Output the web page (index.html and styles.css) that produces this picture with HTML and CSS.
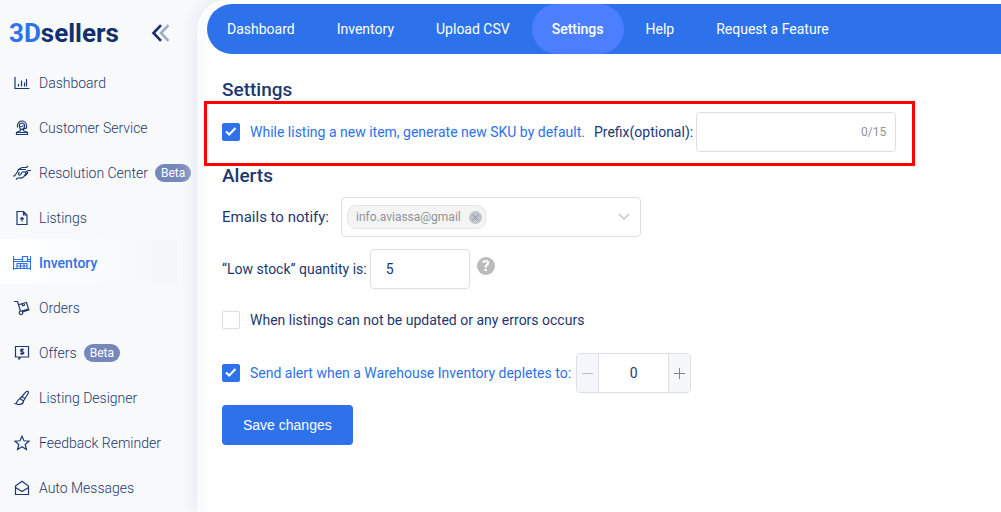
FILE: index.html
```html
<!DOCTYPE html>
<html lang="en">
<head>
<meta charset="utf-8">
<meta name="viewport" content="width=device-width, initial-scale=1">
<title>3Dsellers – Inventory settings</title>
<link rel="stylesheet" href="styles.css">
</head>
<body class="app">
<aside class="sidebar">
  <div class="brand">
    <a class="logo" href="#"><span class="logo-accent">3D</span>sellers</a>
    <button class="collapse" type="button" aria-label="Collapse menu">
      <svg width="20" height="18" viewBox="0 0 20 18" fill="none" stroke-width="2.6"><path d="M17.500 1.200 10 9l7.500 7.800" stroke="#9fadcb"/><path d="M10 1.200 2.500 9l7.500 7.800" stroke="#12306b"/></svg>
    </button>
  </div>
  <nav class="menu" aria-label="Main">
    <a class="menu-item" href="#">
      <svg class="icon" viewBox="0 0 18 18"><path d="M2 3v11.500h14.500M5.500 12.500V10M8.500 12.500V6.500M11.500 12.500V8.500M13.500 12.500V5"/></svg>Dashboard</a>
    <a class="menu-item" href="#">
      <svg class="icon" viewBox="0 0 18 18"><path d="M4.500 8.500V6.500a4.500 4.500 0 0 1 9 0V9l-3 .8M6.500 8V6.500a2.500 2.500 0 0 1 5 0c0 5-5 5-5 1.500 1.500 0 3-.5 3.500-1.500M7.500 10.500v1.200l-4 1.600v2.200h11v-2.200l-4-1.600v-1.200M3.500 13.500h11"/></svg>Customer Service</a>
    <a class="menu-item" href="#">
      <svg class="icon" viewBox="0 0 18 18"><path d="M0 12h1.500L4 8.500 5.500 5.500 9 3.500h4.500l1.500-1.500M6 5.500 13 5.500M6.500 8c-1.500 1.500-1 3 0 3.200 1.800 0 1.500-2.700 3.500-3.400l3 .2c0 3-1 3.700-2.500 5l-3 1.500M13 8l2-1.500h3M11 11.500c2 0 3-1 4-3.500M3 15.500l1.500-1.500 4-.2"/></svg>Resolution Center<span class="badge">Beta</span></a>
    <a class="menu-item" href="#">
      <svg class="icon" viewBox="0 0 18 18"><path d="M4 2.500h6.500L14 6v9.500H4zM10.500 2.500V6H14M9 12.500V8.500M7.200 10.200 9 8.500l1.800 1.700"/></svg>Listings</a>
    <a class="menu-item menu-item-active" href="#" aria-current="page">
      <svg class="icon" viewBox="0 0 18 18"><path d="M.5 2v14M17.500 2v14M.5 7.500h17M.5 14.500h17M.5 5.500h9M9.500 7.500v-5h5v5M14.500 5.500h3M4 14.500v-5h10v5M4 12h10M7.500 9.500v5M11 9.500v5"/></svg>Inventory</a>
    <a class="menu-item" href="#">
      <svg class="icon" viewBox="0 0 18 18"><path d="M1 2.500h3.500L7.500 12M9.500 13l7-2.200M6 5.500l7.500-2L15.500 10l-7 2M9 4.800l.7 2 1.800-.6-.6-2"/><circle cx="8" cy="13.800" r="1.800"/></svg>Orders</a>
    <a class="menu-item" href="#">
      <svg class="icon" viewBox="0 0 18 18"><path d="M2.500 2.500h13v10.500H8l-2 2v-2H2.500zM10.800 6c-.5-.7-3.300-.9-3.400.5 0 1.500 3.500.8 3.500 2.300 0 1.500-3 1.300-3.700.4M9 4.300v6.700"/></svg>Offers<span class="badge">Beta</span></a>
    <a class="menu-item" href="#">
      <svg class="icon" viewBox="0 0 18 18"><path d="M7 9.500 13 2.800c1-1 3.200-.6 2.200 1.500L10.500 12zM7 9.500l3.500 2.500c.2 3-4 4.500-8 2.800 1.800-.3 1-3.500 4.500-5.300zM9 7.500l3 2"/></svg>Listing Designer</a>
    <a class="menu-item" href="#">
      <svg class="icon" viewBox="0 0 18 18"><path d="m9 2.200 2 4.600 5 .4-3.800 3.300 1.200 5L9 12.800l-4.400 2.700 1.200-5L2 7.200l5-.4z"/></svg>Feedback Reminder</a>
    <a class="menu-item" href="#">
      <svg class="icon" viewBox="0 0 18 18"><path d="M2.500 7 9 2.200 15.500 7v8.500h-13zM2.500 8.500 9 12.500l6.500-4"/></svg>Auto Messages</a>
  </nav>
</aside>
<main class="panel">
  <nav class="tabs" aria-label="Inventory">
    <a class="tab" href="#">Dashboard</a>
    <a class="tab" href="#">Inventory</a>
    <a class="tab" href="#">Upload CSV</a>
    <a class="tab tab-active" href="#" aria-current="page">Settings</a>
    <a class="tab" href="#">Help</a>
    <a class="tab" href="#">Request a Feature</a>
  </nav>
  <form class="settings">
    <h2 class="heading">Settings</h2>
    <div class="highlight">
      <input class="check" type="checkbox" id="sku" checked>
      <label class="label label-on" for="sku">While listing a new item, generate new SKU by default.</label>
      <label class="label label-prefix" for="prefix">Prefix(optional):</label>
      <div class="field field-prefix">
        <input class="field-input" type="text" id="prefix" maxlength="15">
        <span class="counter">0/15</span>
      </div>
    </div>
    <h2 class="heading heading-alerts">Alerts</h2>
    <div class="row">
      <label class="label-large" for="emails">Emails to notify:</label>
      <div class="field field-emails">
        <span class="tag">info.aviassa@gmail
          <button class="tag-remove" type="button" aria-label="Remove info.aviassa@gmail"><svg width="13" height="13" viewBox="0 0 13 13" fill="none" stroke="#8a8f98"><path d="m3.500 3.500 6 6m0-6-6 6"/></svg></button>
        </span>
        <select class="email-select" id="emails"><option></option></select>
      </div>
    </div>
    <div class="row row-quantity">
      <label class="label" for="quantity">“Low stock” quantity is:</label>
      <div class="field field-quantity"><input class="field-input" type="text" inputmode="numeric" id="quantity" value="5"></div>
      <button class="help" type="button" aria-label="Help">?</button>
    </div>
    <div class="row row-check">
      <input class="check" type="checkbox" id="errors">
      <label class="label" for="errors">When listings can not be updated or any errors occurs</label>
    </div>
    <div class="row">
      <input class="check" type="checkbox" id="depletes" checked>
      <label class="label label-on" for="depletes">Send alert when a Warehouse Inventory depletes to:</label>
      <div class="stepper">
        <button class="step step-off" type="button" aria-label="Decrease"><svg width="11" height="11" viewBox="0 0 11 11" stroke="currentColor"><path d="M0 5.500h11"/></svg></button>
        <input class="step-value" type="text" inputmode="numeric" aria-label="Warehouse inventory threshold" value="0">
        <button class="step" type="button" aria-label="Increase"><svg width="11" height="11" viewBox="0 0 11 11" stroke="currentColor"><path d="M0 5.500h11M5.500 0v11"/></svg></button>
      </div>
    </div>
    <button class="save" type="submit">Save changes</button>
  </form>
</main>
</body>
</html>
```
FILE: styles.css
```css
* { box-sizing: border-box; }

.app {
  display: flex;
  min-height: 100vh;
  margin: 0;
  overflow: hidden;
  background: #f8f9fb;
  color: #1c3870;
  font: 14px/20px Roboto, sans-serif;
}

a { color: inherit; text-decoration: none; }
button, input, select { margin: 0; padding: 0; border: 0; background: none; color: inherit; font: inherit; }

.sidebar { flex: none; width: 197px; height: 100vh; overflow: hidden; }
.brand { display: flex; align-items: center; justify-content: space-between; height: 59px; padding: 6px 26px 0 9px; }
.logo { color: #12306b; font-size: 26px; line-height: 32px; font-weight: 700; }
.logo-accent { color: #2d72ea; }
.collapse { display: flex; }
.menu-item { display: flex; align-items: center; width: 177px; height: 45px; padding: 2px 0 0 13px; font-weight: 300; white-space: nowrap; }
.menu-item-active { background: linear-gradient(90deg, #ffffff, #f4f7fa); color: #2d72ea; font-weight: 500; }
.icon { flex: none; width: 18px; height: 18px; margin-right: 8px; fill: none; stroke: currentColor; stroke-width: 1.2; }
.badge { margin-left: 7px; padding: 0 6px; border-radius: 9px; background: #7588b9; color: #ffffff; font-size: 12px; line-height: 18px; font-weight: 400; }

.panel { flex: 1; min-width: 0; padding: 4px 0 0 10px; border-radius: 30px 0 0 0; background: linear-gradient(90deg, #f9fafd, #ffffff 16px); box-shadow: 0 0 20px #dfe5ee; }
.tabs { display: flex; gap: 2px; height: 50px; border-radius: 25px 0 0 25px; background: #2d72ea; color: #ffffff; white-space: nowrap; }
.tab { padding: 0 20px; border-radius: 25px; line-height: 50px; }
.tab-active { background: #4c7fff; font-weight: 500; }

.settings { padding: 24px 0 0 15px; }
.heading { margin: 0; font-size: 19px; line-height: 24px; font-weight: 500; }
.heading-alerts { margin-bottom: 9px; }
.highlight { display: flex; align-items: center; width: max-content; height: 65px; margin: -1px 0 -2px -18px; padding: 0 16px 4px 15px; border: 3px solid #ff0000; white-space: nowrap; }
.label-on { color: #2d72ea; }
.label-prefix { margin: 0 3px 0 9px; }
.label-large { margin-right: 12px; font-size: 15px; }

.check { flex: none; appearance: none; width: 18px; height: 18px; margin-right: 10px; border: 1px solid #dcdfe6; border-radius: 2px; background: #ffffff; }
.check:checked { border-color: #2d72ea; background: #2d72ea url("data:image/svg+xml,%3Csvg xmlns='http://www.w3.org/2000/svg' viewBox='0 0 16 16' fill='none' stroke='white' stroke-width='2'%3E%3Cpath d='m3 7.500 3.200 3L12.500 4'/%3E%3C/svg%3E"); }

.row { display: flex; align-items: center; min-height: 40px; margin-bottom: 12px; white-space: nowrap; }
.field { display: flex; align-items: center; height: 40px; border: 1px solid #dcdfe6; border-radius: 4px; background: #ffffff; }
.field-input { flex: 1; min-width: 0; height: 38px; padding: 0 15px; }
.field-prefix { width: 200px; }
.counter { padding-right: 9px; color: #909399; font-size: 12px; }
.field-emails { width: 300px; padding: 0 5px; }
.tag { display: flex; align-items: center; gap: 8px; height: 24px; padding: 0 3px 0 8px; border: 1px solid #e4e5e8; border-radius: 9px; background: #f4f4f5; color: #909399; font-size: 12px; }
.tag-remove { display: flex; border-radius: 50%; background: #c0c4cc; }
.email-select { flex: 1; min-width: 0; height: 38px; appearance: none; background: url("data:image/svg+xml,%3Csvg xmlns='http://www.w3.org/2000/svg' width='12' height='8' fill='none' stroke='%23b8bcc6' stroke-width='1.2'%3E%3Cpath d='m1 1 5 5 5-5'/%3E%3C/svg%3E") no-repeat right 5px center; }
.field-quantity { width: 100px; margin: 0 7px 0 3px; }
.help { width: 18px; height: 18px; margin-bottom: 7px; border-radius: 50%; background: #bbbbbb; color: #ffffff; font-size: 15px; line-height: 18px; font-weight: 700; }
.row-check { min-height: 38px; margin-bottom: 14px; }

.stepper { display: flex; width: 115px; height: 40px; margin-left: 5px; overflow: hidden; border: 1px solid #dcdfe6; border-radius: 4px; }
.step { display: flex; flex: none; align-items: center; justify-content: center; width: 21px; background: #f5f7fa; color: #7d8798; }
.step-off { color: #b8bdc6; }
.step-value { flex: 1; min-width: 0; border: solid #dcdfe6; border-width: 0 1px; text-align: center; }

.save { height: 40px; padding: 0 21px; border-radius: 4px; background: #2d72ea; color: #ffffff; font-family: "Liberation Sans", Arial, sans-serif; }
```
